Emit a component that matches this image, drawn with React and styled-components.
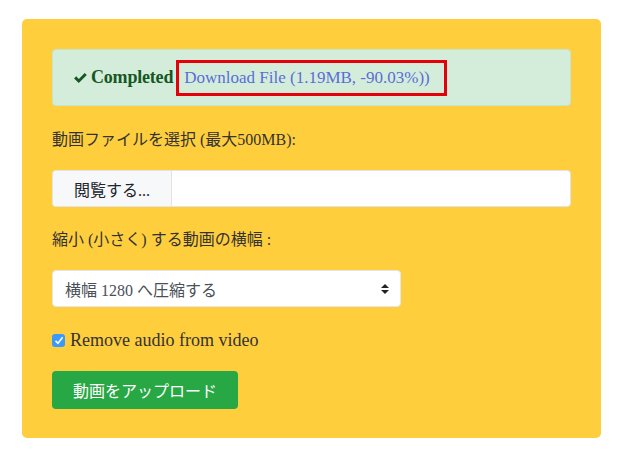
import React from "react"
import styled, { createGlobalStyle } from "styled-components"

const GlobalStyle = createGlobalStyle`
  html, body {
    margin: 0;
    background: #fff;
  }
  body {
    font-family: "Liberation Serif", "Noto Sans CJK JP", serif;
    font-size: 16px;
    color: #333;
  }
`

const Page = styled.div`
  padding: 19px 26px 0 22px;
`

const Card = styled.div`
  background: #ffce3c;
  border-radius: 5px;
  padding: 30px 30px 29px;
  display: flex;
  flex-direction: column;
  align-items: flex-start;
`

const Alert = styled.div`
  align-self: stretch;
  box-sizing: border-box;
  height: 57px;
  background: #d4edda;
  border: 1px solid #c3e6cb;
  border-radius: 4px;
  padding: 0 20px;
  display: flex;
  align-items: center;
  margin-bottom: 22px;
`

const Status = styled.span`
  color: #155724;
  font-weight: bold;
  display: flex;
  align-items: center;
  gap: 3px;
  font-size: 18px;
  letter-spacing: -0.2px;
`

const DownloadLink = styled.a`
  display: inline-block;
  margin-left: 3px;
  color: #5a6ed8;
  text-decoration: none;
  border: 3px solid #e5000a;
  padding: 6px 14px 6px 5px;
  line-height: 18px;
  font-size: 17px;
`

const Label = styled.label`
  display: block;
  line-height: 24px;
  font-size: 16px;
  color: #333;
  margin-bottom: ${p => p.$gap}px;
`

const FileGroup = styled.div`
  align-self: stretch;
  display: flex;
  height: 37px;
  background: #fff;
  border: 1px solid #e3e3e3;
  border-radius: 4px;
  box-sizing: border-box;
  overflow: hidden;
  margin-bottom: 21px;
`

const Browse = styled.span`
  width: 118px;
  background: #f7f8fa;
  border-right: 1px solid #e3e3e3;
  display: flex;
  align-items: center;
  justify-content: center;
  color: #212529;
  font-size: 16px;
`

const Select = styled.div`
  width: 349px;
  height: 37px;
  box-sizing: border-box;
  background: #fff;
  border: 1px solid #e6e6e6;
  border-radius: 4px;
  display: flex;
  align-items: center;
  justify-content: space-between;
  padding: 0 11px 0 12px;
  color: #495057;
  font-size: 16px;
  margin-bottom: 21px;
`

const CheckRow = styled.label`
  display: flex;
  align-items: center;
  gap: 5px;
  line-height: 24px;
  font-size: 18px;
  color: #333;
  margin-bottom: 19px;
`

const CheckBox = styled.span`
  width: 13px;
  height: 13px;
  border-radius: 3px;
  background: #3b99fc;
  display: flex;
  align-items: center;
  justify-content: center;
`

const Button = styled.button`
  background: #28a745;
  color: #fff;
  border: none;
  border-radius: 4px;
  height: 38px;
  padding: 0 21px;
  font-family: "Noto Sans CJK JP", sans-serif;
  font-size: 16px;
`

export default function App() {
  return (
    <Page>
      <GlobalStyle />
      <Card>
        <Alert>
          <Status>
            <svg width="15" height="12" viewBox="0 0 14 12">
              <path d="M0.6 6.4 L2.7 4.3 L5.3 6.9 L11.2 1 L13.3 3.1 L5.3 11.1 Z" fill="#155724" />
            </svg>
            Completed
          </Status>
          <DownloadLink href="#">Download File (1.19MB, -90.03%))</DownloadLink>
        </Alert>

        <Label $gap={18}>動画ファイルを選択 (最大500MB):</Label>
        <FileGroup>
          <Browse>閲覧する...</Browse>
        </FileGroup>

        <Label $gap={18}>縮小 (小さく) する動画の横幅 :</Label>
        <Select>
          <span>横幅 1280 へ圧縮する</span>
          <svg width="8" height="12" viewBox="0 0 8 12">
            <path d="M0 5 L4 1 L8 5 Z M0 7 L4 11 L8 7 Z" fill="#222" />
          </svg>
        </Select>

        <CheckRow>
          <CheckBox>
            <svg width="10" height="9" viewBox="0 0 10 9">
              <path d="M1.5 4.8 L4 7.2 L8.6 1.2" stroke="#fff" strokeWidth="1.6" fill="none" />
            </svg>
          </CheckBox>
          Remove audio from video
        </CheckRow>

        <Button>動画をアップロード</Button>
      </Card>
    </Page>
  )
}
